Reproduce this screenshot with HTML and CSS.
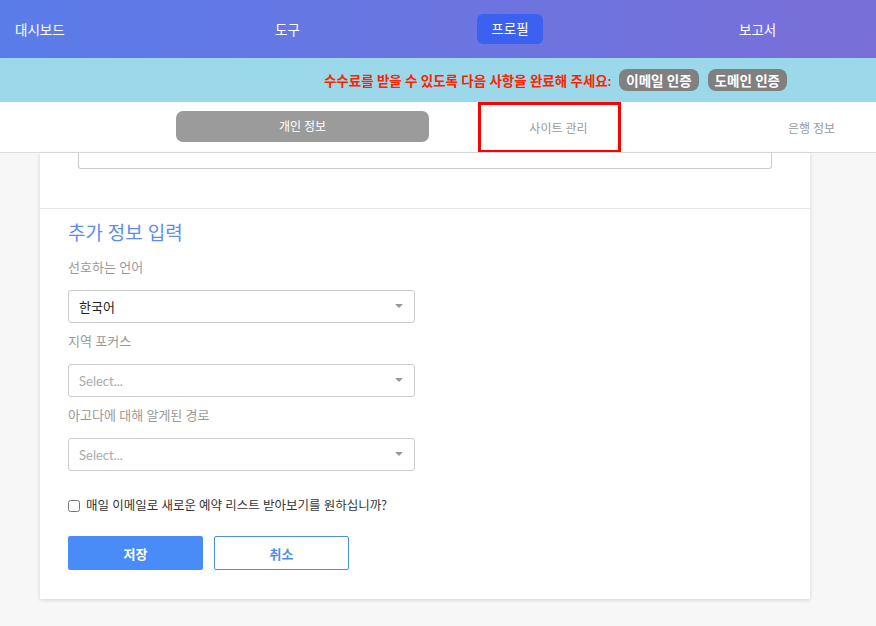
FILE: index.html
```html
<!DOCTYPE html>
<html lang="ko">
<head>
    <meta charset="UTF-8">
    <meta name="viewport" content="width=device-width, initial-scale=1.0">
    <title>프로필</title>
    <link rel="stylesheet" href="styles.css">
</head>
<body>
    <nav class="topnav">
        <a class="nav-item">대시보드</a>
        <a class="nav-item">도구</a>
        <a class="nav-item active">프로필</a>
        <a class="nav-item">보고서</a>
    </nav>

    <div class="notice">
        <span class="notice-text">수수료를 받을 수 있도록 다음 사항을 완료해 주세요:</span>
        <span class="badge">이메일 인증</span>
        <span class="badge">도메인 인증</span>
    </div>

    <div class="tabs">
        <div class="tab active"><span>개인 정보</span></div>
        <div class="tab"><span>사이트 관리</span><i class="highlight"></i></div>
        <div class="tab"><span>은행 정보</span></div>
    </div>

    <main class="content">
        <div class="card">
            <section class="section-top">
                <div class="textarea-tail"></div>
            </section>

            <section class="section">
                <h2>추가 정보 입력</h2>

                <label>선호하는 언어</label>
                <div class="select">
                    <span class="value">한국어</span>
                    <span class="caret"></span>
                </div>

                <label>지역 포커스</label>
                <div class="select">
                    <span class="placeholder">Select...</span>
                    <span class="caret"></span>
                </div>

                <label>아고다에 대해 알게된 경로</label>
                <div class="select">
                    <span class="placeholder">Select...</span>
                    <span class="caret"></span>
                </div>

                <div class="check-row">
                    <input type="checkbox" id="dailyMail">
                    <label for="dailyMail" class="check-label">매일 이메일로 새로운 예약 리스트 받아보기를 원하십니까?</label>
                </div>

                <div class="actions">
                    <button type="button" class="btn primary">저장</button>
                    <button type="button" class="btn outline">취소</button>
                </div>
            </section>
        </div>
    </main>
</body>
</html>
```

FILE: styles.css
```css
* {
    box-sizing: border-box;
}
body {
    margin: 0;
    font-family: "Lato", "Noto Sans CJK KR", sans-serif;
    background-color: #F7F7F7;
    color: #333;
}
.topnav {
    height: 58px;
    display: grid;
    grid-template-columns: 260px 202px 262px auto;
    align-items: center;
    padding-left: 15px;
    background: linear-gradient(90deg, #5A7CE9, #7A6FD8);
}
.nav-item {
    color: #FFFFFF;
    font-size: 13.5px;
    justify-self: start;
}
.nav-item.active {
    background-color: #3C61F0;
    border-radius: 6px;
    width: 66px;
    height: 30px;
    line-height: 30px;
    text-align: center;
}
.notice {
    height: 44px;
    background-color: #9BD8E9;
    display: flex;
    align-items: center;
    justify-content: flex-end;
    padding-right: 89px;
}
.notice-text {
    color: #FF2200;
    font-size: 13.5px;
    font-weight: bold;
    margin-right: 8px;
}
.badge {
    background-color: #808080;
    color: #FFFFFF;
    font-size: 13.5px;
    font-weight: bold;
    border-radius: 8px;
    padding: 1px 7px;
    margin-right: 9px;
}
.badge:last-child {
    margin-right: 0;
}
.tabs {
    height: 51px;
    background-color: #FFFFFF;
    border-bottom: 1px solid #DDDDDD;
    display: flex;
    padding-left: 176px;
    overflow: hidden;
}
.tab {
    position: relative;
    flex: 0 0 253px;
    display: flex;
    align-items: center;
    justify-content: center;
    font-size: 12px;
    color: #999;
}
.tab.active span {
    display: block;
    width: 253px;
    height: 31px;
    line-height: 31px;
    text-align: center;
    color: #FFFFFF;
    background-color: #9B9B9B;
    border-radius: 7px;
    margin-top: -2px;
}
.tab + .tab span {
    margin-left: 6px;
}
.highlight {
    position: absolute;
    left: 49px;
    top: 0;
    width: 143px;
    height: 51px;
    border: 3px solid #FF0000;
}
.content {
    padding: 0 66px 27px 40px;
}
.card {
    background-color: #FFFFFF;
    box-shadow: 0 1px 4px rgba(0, 0, 0, 0.15);
}
.section-top {
    padding: 0 38px 39px;
    border-bottom: 1px solid #E6E6E6;
}
.textarea-tail {
    height: 16px;
    border: 1px solid #CCCCCC;
    border-top: none;
    border-radius: 0 0 3px 3px;
}
.section {
    padding: 11px 28px 29px;
}
h2 {
    margin: 0 0 11px;
    font-size: 19px;
    font-weight: normal;
    line-height: 26px;
    color: #5B8DEF;
}
label {
    display: block;
    font-size: 13px;
    line-height: 20px;
    color: #999;
    margin: 8px 0 13px;
}
h2 + label {
    margin-top: 0;
}
.select {
    position: relative;
    width: 347px;
    height: 33px;
    border: 1px solid #CCCCCC;
    border-radius: 3px;
    display: flex;
    align-items: center;
    padding-left: 10px;
    font-size: 13px;
}
.value {
    color: #222;
}
.placeholder {
    color: #AAAAAA;
    font-size: 13px;
}
.caret {
    position: absolute;
    right: 11px;
    top: 13px;
    border-left: 4px solid transparent;
    border-right: 4px solid transparent;
    border-top: 4px solid #999;
}
.check-row {
    display: flex;
    align-items: center;
    margin-top: 25px;
}
.check-row input {
    margin: 0 6px 0 0;
    width: 12px;
    height: 12px;
}
.check-label {
    margin: 0;
    color: #333;
    font-size: 12.5px;
}
.actions {
    display: flex;
    gap: 11px;
    margin-top: 20px;
}
.btn {
    width: 135px;
    height: 34px;
    border-radius: 2px;
    font-family: inherit;
    font-size: 13px;
    font-weight: bold;
    cursor: pointer;
}
.btn.primary {
    background-color: #4A8CF7;
    border: none;
    color: #FFFFFF;
}
.btn.outline {
    background-color: #FFFFFF;
    border: 1px solid #4A8CF7;
    color: #4A8CF7;
}
```
